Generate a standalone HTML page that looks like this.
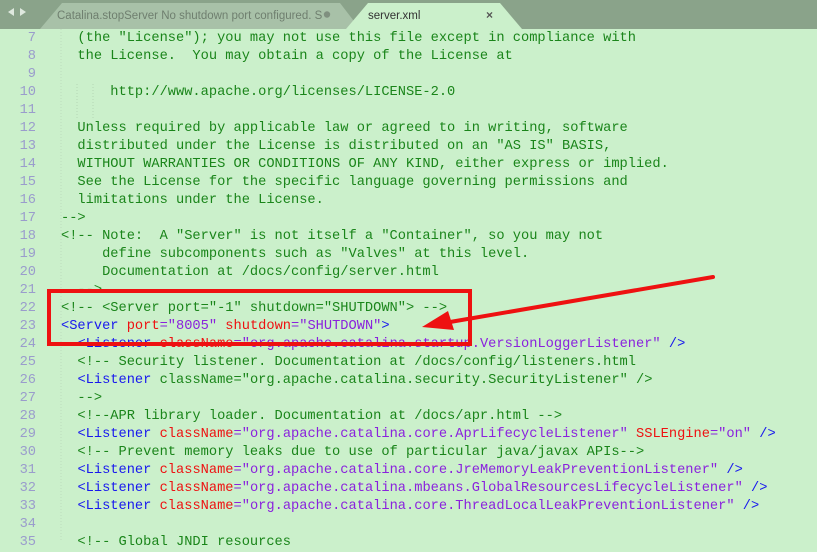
<!DOCTYPE html>
<html><head><style>
body{margin:0;width:817px;height:541px;overflow:hidden;background:#cbf0cb;position:relative;font-family:"Liberation Mono",monospace}
#bar{position:absolute;left:0;top:0;width:817px;height:29px;background:#8aa38a}
.ln{position:absolute;left:0;width:36px;text-align:right;color:#9a9ccc;font-size:13.7px;line-height:18px}
.code{position:absolute;left:61px;font-size:13.7px;line-height:18px;white-space:pre;color:#1a851a}
.t{color:#1818ee}.a{color:#ee1111}.s{color:#8a22dd}
</style></head><body>
<div id="bar"></div>
<svg style="position:absolute;left:0;top:0" width="817" height="29">
<polygon points="8,12 14,8 14,16" fill="#dfe9df"/><polygon points="20,8 26,12 20,16" fill="#dfe9df"/>
<polygon points="40,29 62,3 340,3 360,29" fill="#a8c1a8"/>
<polygon points="346,29 368,3 500,3 522,29" fill="#cbf0cb"/>
<text x="57" y="19" font-family="Liberation Sans,sans-serif" font-size="11.5" fill="#6f7f6f">Catalina.stopServer No shutdown port configured. S</text>
<circle cx="327" cy="14.5" r="3.2" fill="#7f8f7f"/>
<text x="368" y="19" font-family="Liberation Sans,sans-serif" font-size="11.5" fill="#333">server.xml</text>
<text x="486" y="19" font-family="Liberation Sans,sans-serif" font-size="12" fill="#555" font-weight="bold">×</text>
</svg>
<svg style="position:absolute;left:0;top:0" width="817" height="541">
<line x1="77" y1="84" x2="77" y2="120" stroke="#b6d6b6" stroke-dasharray="1,2"/>
<line x1="93" y1="84" x2="93" y2="120" stroke="#b6d6b6" stroke-dasharray="1,2"/>
<line x1="61" y1="29" x2="61" y2="541" stroke="#bcdcbc" stroke-dasharray="1,2"/>
</svg>
<div class="ln" style="top:30px">7<br>8<br>9<br>10<br>11<br>12<br>13<br>14<br>15<br>16<br>17<br>18<br>19<br>20<br>21<br>22<br>23<br>24<br>25<br>26<br>27<br>28<br>29<br>30<br>31<br>32<br>33<br>34<br>35</div>
<div class="code" style="top:30px">  (the "License"); you may not use this file except in compliance with
  the License.  You may obtain a copy of the License at

      http://www.apache.org/licenses/LICENSE-2.0

  Unless required by applicable law or agreed to in writing, software
  distributed under the License is distributed on an "AS IS" BASIS,
  WITHOUT WARRANTIES OR CONDITIONS OF ANY KIND, either express or implied.
  See the License for the specific language governing permissions and
  limitations under the License.
-->
&lt;!-- Note:  A "Server" is not itself a "Container", so you may not
     define subcomponents such as "Valves" at this level.
     Documentation at /docs/config/server.html
  -->
&lt;!-- &lt;Server port="-1" shutdown="SHUTDOWN"&gt; --&gt;
<span class="t">&lt;Server</span> <span class="a">port</span><span class="s">="8005"</span> <span class="a">shutdown</span><span class="s">="SHUTDOWN"</span><span class="t">&gt;</span>
  <span class="t">&lt;Listener</span> <span class="a">className</span><span class="s">="org.apache.catalina.startup.VersionLoggerListener"</span> <span class="t">/&gt;</span>
  &lt;!-- Security listener. Documentation at /docs/config/listeners.html
  <span class="t">&lt;Listener</span> className="org.apache.catalina.security.SecurityListener" /&gt;
  --&gt;
  &lt;!--APR library loader. Documentation at /docs/apr.html --&gt;
  <span class="t">&lt;Listener</span> <span class="a">className</span><span class="s">="org.apache.catalina.core.AprLifecycleListener"</span> <span class="a">SSLEngine</span><span class="s">="on"</span> <span class="t">/&gt;</span>
  &lt;!-- Prevent memory leaks due to use of particular java/javax APIs--&gt;
  <span class="t">&lt;Listener</span> <span class="a">className</span><span class="s">="org.apache.catalina.core.JreMemoryLeakPreventionListener"</span> <span class="t">/&gt;</span>
  <span class="t">&lt;Listener</span> <span class="a">className</span><span class="s">="org.apache.catalina.mbeans.GlobalResourcesLifecycleListener"</span> <span class="t">/&gt;</span>
  <span class="t">&lt;Listener</span> <span class="a">className</span><span class="s">="org.apache.catalina.core.ThreadLocalLeakPreventionListener"</span> <span class="t">/&gt;</span>

  &lt;!-- Global JNDI resources</div>
<svg style="position:absolute;left:0;top:0" width="817" height="541">
<rect x="49" y="291" width="421" height="53" fill="none" stroke="#ee1111" stroke-width="4"/>
<line x1="713" y1="277" x2="450" y2="322" stroke="#ee1111" stroke-width="4" stroke-linecap="round"/>
<polygon points="422,327 448,311 454,330" fill="#ee1111"/>
</svg>
</body></html>
